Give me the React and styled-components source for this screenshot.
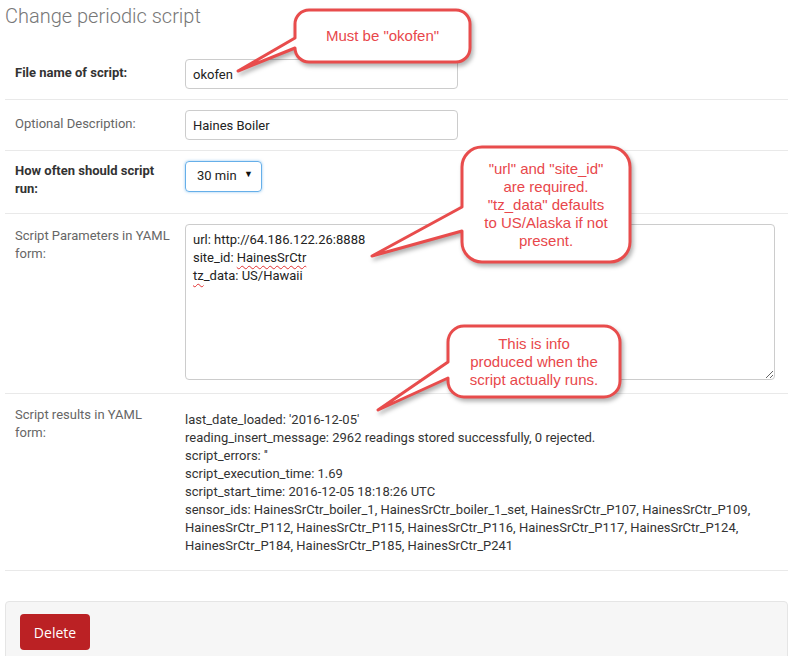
import React from 'react'
import styled, { createGlobalStyle } from 'styled-components'

const GlobalStyle = createGlobalStyle`
  html, body { margin: 0; padding: 0; background: #fff; }
  body { font-family: Roboto, "Liberation Sans", sans-serif; font-size: 13px; color: #333; }
`

const Page = styled.div`
  position: relative;
  width: 788px;
  height: 656px;
  overflow: hidden;
  padding-left: 5px;
  box-sizing: border-box;
`

const Title = styled.h1`
  margin: 0;
  height: 49px;
  padding-top: 2px;
  box-sizing: border-box;
  font-size: 20px;
  line-height: 28px;
  font-weight: 300;
  color: #777;
`

const Row = styled.div`
  display: grid;
  grid-template-columns: 180px 1fr;
  padding: 10px 0;
  border-bottom: 1px solid #e9e9e9;
`

const Label = styled.div`
  padding: ${p => p.$pt}px 5px 0 10px;
  margin-bottom: 5px;
  line-height: 18px;
  font-weight: ${p => (p.$strong ? 700 : 400)};
  color: ${p => (p.$strong ? '#333' : '#666')};
`

const Field = styled.div`
  padding-right: 13px;
`

const TextInput = styled.input`
  display: block;
  width: 273px;
  height: 30px;
  box-sizing: border-box;
  padding: 0 7px;
  border: 1px solid #ccc;
  border-radius: 4px;
  font: 13px Roboto, sans-serif;
  color: #222;
  outline: none;
`

const Select = styled.div`
  display: flex;
  align-items: center;
  justify-content: space-between;
  width: 77px;
  height: 31px;
  box-sizing: border-box;
  padding: 0 8px 2px 11px;
  border: 1px solid #66afe9;
  border-radius: 4px;
  box-shadow: 0 0 3px rgba(102, 175, 233, 0.7);
  color: #222;
`

const Caret = styled.span`
  font-size: 9px;
  color: #111;
  margin-top: -3px;
`

const Area = styled.div`
  height: 156px;
  margin-bottom: 3px;
  box-sizing: border-box;
  padding: 6px 7px;
  border: 1px solid #ccc;
  border-radius: 4px;
  line-height: 18px;
  color: #222;
  overflow: auto;
  resize: vertical;
`

const Typo = styled.span`
  text-decoration: underline wavy #e03030;
  text-decoration-thickness: 1px;
  text-underline-offset: 3px;
`

const Results = styled.div`
  padding: 7px 0 5px;
  line-height: 18px;
  color: #333;
  white-space: nowrap;
`

const Footer = styled.div`
  margin-top: 30px;
  height: 80px;
  padding: 12px 14px;
  background: #f6f6f6;
  border: 1px solid #e5e5e5;
  border-radius: 4px;
`

const DeleteButton = styled.button`
  width: 70px;
  height: 36px;
  border: none;
  border-radius: 4px;
  background: #bb2124;
  color: #fff;
  font: 14px "Open Sans", sans-serif;
  padding: 0;
`

const CalloutWrap = styled.div`
  position: absolute;
  left: ${p => p.$x}px;
  top: ${p => p.$y}px;
  width: ${p => p.$w}px;
  height: ${p => p.$h}px;
  pointer-events: none;
`

const CalloutShape = styled.svg`
  position: absolute;
  inset: 0;
  overflow: visible;
  filter: drop-shadow(2px 3px 2px rgba(0, 0, 0, 0.3));
`

const CalloutText = styled.div`
  position: absolute;
  left: ${p => p.$x}px;
  top: ${p => p.$y}px;
  width: ${p => p.$w}px;
  height: ${p => p.$h}px;
  display: flex;
  align-items: center;
  justify-content: center;
  text-align: center;
  font-family: "Liberation Sans", Arial, sans-serif;
  font-size: 15px;
  line-height: 18px;
  color: #e8474b;
`

function Callout({ box, r, ya, yb, tip, children }) {
  const [x0, y0, x1, y1] = box
  const bx = Math.min(x0, tip[0]) - 4
  const by = Math.min(y0, tip[1]) - 4
  const w = Math.max(x1, tip[0]) + 8 - bx
  const h = Math.max(y1, tip[1]) + 8 - by
  const d = `M${x0 + r},${y0} H${x1 - r} A${r},${r} 0 0 1 ${x1},${y0 + r} V${y1 - r} A${r},${r} 0 0 1 ${x1 - r},${y1} H${x0 + r} A${r},${r} 0 0 1 ${x0},${y1 - r} V${yb} L${tip[0]},${tip[1]} L${x0},${ya} V${y0 + r} A${r},${r} 0 0 1 ${x0 + r},${y0} Z`
  return (
    <CalloutWrap $x={bx} $y={by} $w={w} $h={h}>
      <CalloutShape width={w} height={h} viewBox={`${bx} ${by} ${w} ${h}`}>
        <path d={d} fill="#fff" stroke="#e84c4c" strokeWidth="3" strokeLinejoin="round" />
      </CalloutShape>
      <CalloutText $x={x0 - bx} $y={y0 - by} $w={x1 - x0} $h={y1 - y0}>
        <div>{children}</div>
      </CalloutText>
    </CalloutWrap>
  )
}

const results = [
  "last_date_loaded: '2016-12-05'",
  'reading_insert_message: 2962 readings stored successfully, 0 rejected.',
  "script_errors: ''",
  'script_execution_time: 1.69',
  'script_start_time: 2016-12-05 18:18:26 UTC',
  'sensor_ids: HainesSrCtr_boiler_1, HainesSrCtr_boiler_1_set, HainesSrCtr_P107, HainesSrCtr_P109,',
  'HainesSrCtr_P112, HainesSrCtr_P115, HainesSrCtr_P116, HainesSrCtr_P117, HainesSrCtr_P124,',
  'HainesSrCtr_P184, HainesSrCtr_P185, HainesSrCtr_P241',
]

export default function App() {
  return (
    <Page>
      <GlobalStyle />
      <Title>Change periodic script</Title>

      <Row>
        <Label $strong $pt={5}>File name of script:</Label>
        <Field><TextInput defaultValue="okofen" /></Field>
      </Row>

      <Row>
        <Label $pt={5}>Optional Description:</Label>
        <Field><TextInput defaultValue="Haines Boiler" /></Field>
      </Row>

      <Row>
        <Label $strong $pt={1}>How often should script<br />run:</Label>
        <Field>
          <Select>30 min <Caret>▼</Caret></Select>
        </Field>
      </Row>

      <Row>
        <Label $pt={3}>Script Parameters in YAML<br />form:</Label>
        <Field>
          <Area>
            url: http://64.186.122.26:8888<br />
            site_id: <Typo>HainesSrCtr</Typo><br />
            <Typo>tz</Typo>_data: US/Hawaii
          </Area>
        </Field>
      </Row>

      <Row>
        <Label $pt={2}>Script results in YAML<br />form:</Label>
        <Results>
          {results.map(line => <div key={line}>{line}</div>)}
        </Results>
      </Row>

      <Footer>
        <DeleteButton>Delete</DeleteButton>
      </Footer>

      <Callout box={[295, 10, 470, 62]} r={14} ya={38} yb={48} tip={[238, 71]}>
        Must be "okofen"
      </Callout>
      <Callout box={[462, 147, 630, 262]} r={20} ya={207} yb={231} tip={[372, 256]}>
        "url" and "site_id"<br />are required.<br />"tz_data" defaults<br />to US/Alaska if not<br />present.
      </Callout>
      <Callout box={[448, 326, 620, 397]} r={16} ya={362} yb={378} tip={[378, 410]}>
        This is info<br />produced when the<br />script actually runs.
      </Callout>
    </Page>
  )
}
